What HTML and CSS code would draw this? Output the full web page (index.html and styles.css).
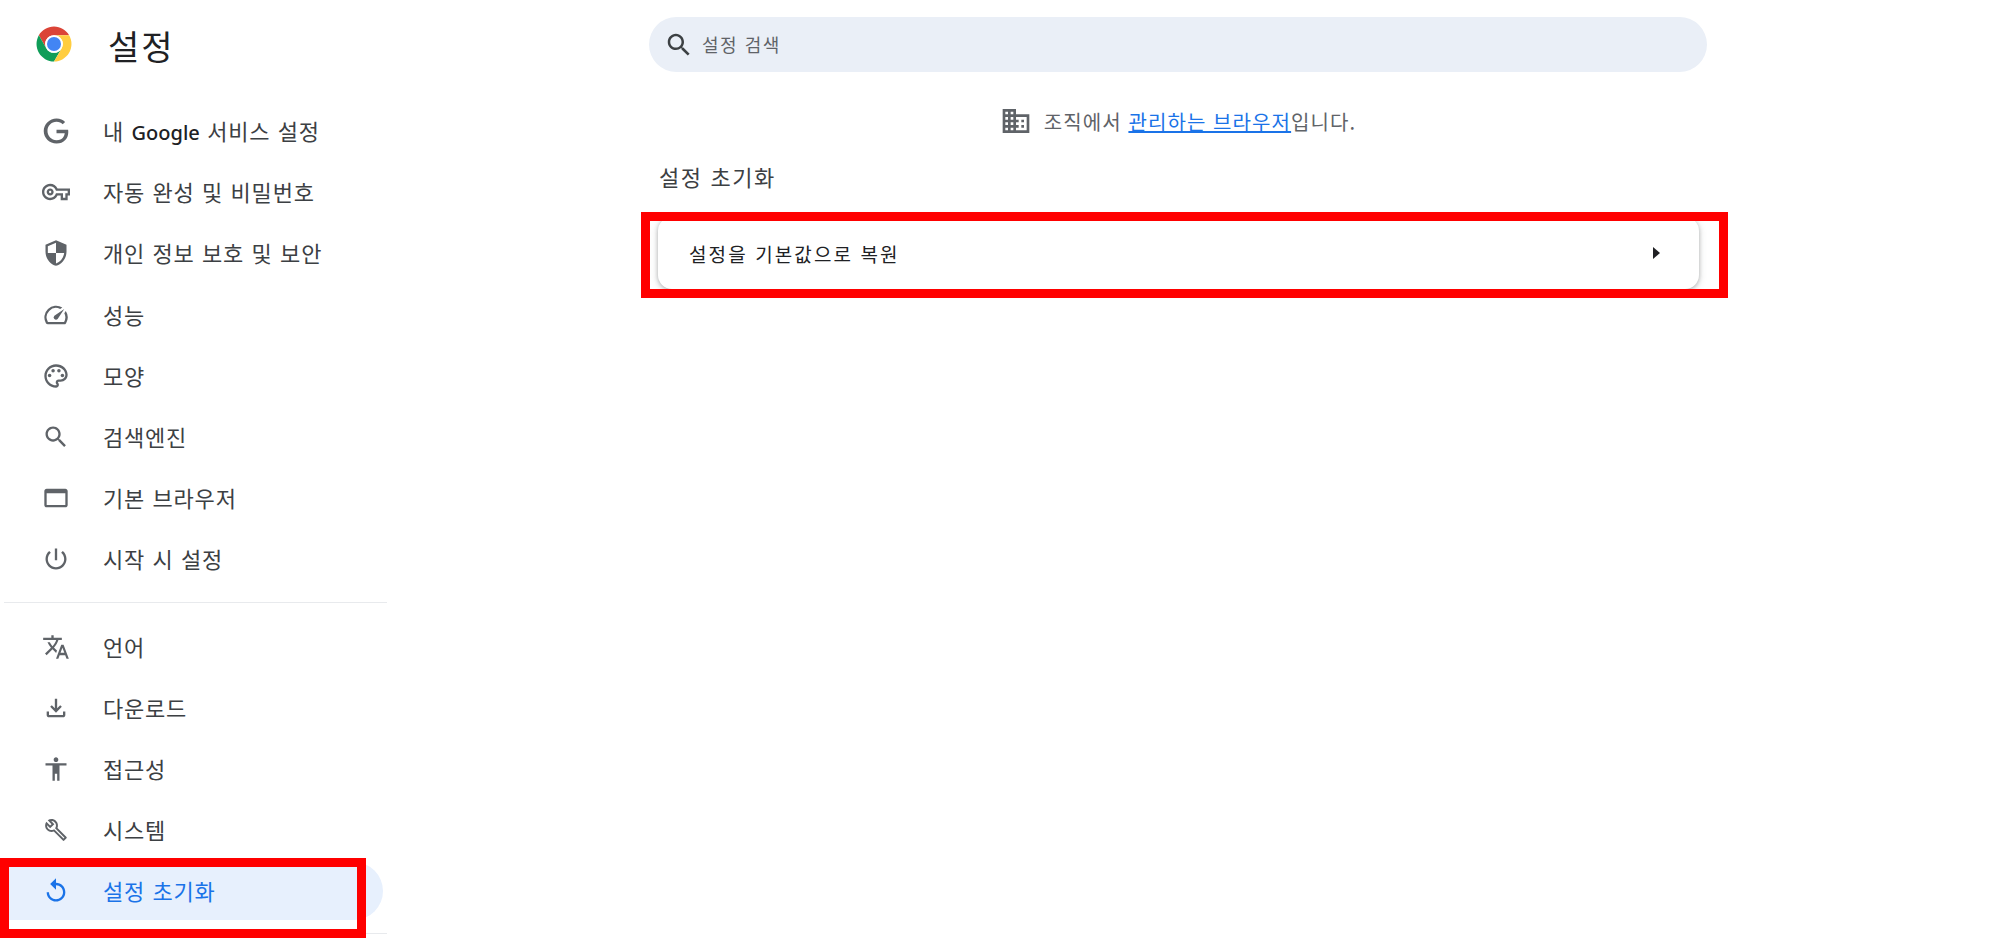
FILE: index.html
```html
<!DOCTYPE html>
<html lang="ko">
<head>
  <meta charset="UTF-8">
  <title>설정 초기화</title>
  <link rel="stylesheet" href="styles.css">
</head>
<body>
  <aside class="sidebar">
    <div class="brand">
      <svg class="logo" viewBox="0 0 48 48">
        <path fill="#db4437" d="M24 4C16.6 4 10.1 8 6.7 14l8.6 15A10 10 0 0 1 24 14h17.3C37.9 8 31.4 4 24 4z"/>
        <path fill="#0f9d58" d="M6.7 14A20 20 0 0 0 24 44l8.7-15A10 10 0 0 1 15.3 29z"/>
        <path fill="#ffcd40" d="M41.3 14H24a10 10 0 0 1 8.7 15L24 44a20 20 0 0 0 17.3-30z"/>
        <circle cx="24" cy="24" r="10" fill="#fff"/>
        <circle cx="24" cy="24" r="8" fill="#4285f4"/>
      </svg>
      <h1 class="brand-title">설정</h1>
    </div>

    <nav class="nav">
      <a class="nav-item">
        <svg class="icon" viewBox="0 0 24 24"><path transform="translate(1.2 1.2) scale(.9)" d="M12.48 10.92v3.28h7.84c-.24 1.84-.853 3.187-1.787 4.133-1.147 1.147-2.933 2.4-6.053 2.4-4.827 0-8.6-3.893-8.6-8.72s3.773-8.72 8.6-8.72c2.6 0 4.507 1.027 5.907 2.347l2.307-2.307C18.747 1.44 16.133 0 12.48 0 5.867 0 .307 5.387.307 12s5.56 12 12.173 12c3.573 0 6.267-1.173 8.373-3.36 2.16-2.16 2.84-5.213 2.84-7.667 0-.76-.053-1.467-.173-2.053H12.48z"/></svg>
        <span>내 <b class="google">Google</b> 서비스 설정</span>
      </a>
      <a class="nav-item">
        <svg class="icon" viewBox="0 0 24 24"><path d="M22 19h-6v-4h-2.68c-1.14 2.42-3.6 4-6.32 4-3.86 0-7-3.14-7-7s3.14-7 7-7c2.72 0 5.17 1.58 6.32 4H24v6h-2v4zm-4-2h2v-4h2v-2H11.94l-.23-.67C11.01 8.34 9.11 7 7 7c-2.76 0-5 2.24-5 5s2.24 5 5 5c2.11 0 4.01-1.34 4.71-3.33l.23-.67H18v4zM7 15c-1.65 0-3-1.35-3-3s1.35-3 3-3 3 1.35 3 3-1.35 3-3 3zm0-4c-.55 0-1 .45-1 1s.45 1 1 1 1-.45 1-1-.45-1-1-1z"/></svg>
        <span>자동 완성 및 비밀번호</span>
      </a>
      <a class="nav-item">
        <svg class="icon" viewBox="0 0 24 24"><path d="M12 1L3 5v6c0 5.55 3.84 10.74 9 12 5.16-1.26 9-6.45 9-12V5l-9-4zm0 10.99h7c-.53 4.12-3.28 7.79-7 8.94V12H5V6.3l7-3.11v8.8z"/></svg>
        <span>개인 정보 보호 및 보안</span>
      </a>
      <a class="nav-item">
        <svg class="icon" viewBox="0 0 24 24"><path d="M20.38 8.57l-1.23 1.85a8 8 0 0 1-.22 7.58H5.07A8 8 0 0 1 15.58 6.85l1.85-1.23A10 10 0 0 0 3.35 19a2 2 0 0 0 1.72 1h13.85a2 2 0 0 0 1.74-1 10 10 0 0 0-.27-10.44z"/><path d="M10.59 15.41a2 2 0 0 0 2.83 0l5.66-8.49-8.49 5.66a2 2 0 0 0 0 2.83z"/></svg>
        <span>성능</span>
      </a>
      <a class="nav-item">
        <svg class="icon" viewBox="0 0 24 24"><path d="M12 22C6.49 22 2 17.51 2 12S6.49 2 12 2s10 4.04 10 9c0 3.31-2.69 6-6 6h-1.77c-.28 0-.5.22-.5.5 0 .12.05.23.13.33.41.47.64 1.06.64 1.67 0 1.38-1.12 2.5-2.5 2.5zm0-18c-4.41 0-8 3.59-8 8s3.59 8 8 8c.28 0 .5-.22.5-.5 0-.16-.08-.28-.14-.35-.41-.46-.63-1.05-.63-1.65 0-1.38 1.12-2.5 2.5-2.5H16c2.21 0 4-1.79 4-4 0-3.86-3.59-7-8-7z"/><circle cx="6.5" cy="11.5" r="1.5"/><circle cx="9.5" cy="7.5" r="1.5"/><circle cx="14.5" cy="7.5" r="1.5"/><circle cx="17.5" cy="11.5" r="1.5"/></svg>
        <span>모양</span>
      </a>
      <a class="nav-item">
        <svg class="icon" viewBox="0 0 24 24"><path d="M15.5 14h-.79l-.28-.27C15.41 12.59 16 11.11 16 9.5 16 5.91 13.09 3 9.5 3S3 5.91 3 9.5 5.91 16 9.5 16c1.61 0 3.09-.59 4.23-1.57l.27.28v.79l5 4.99L20.49 19l-4.99-5zm-6 0C7.01 14 5 11.99 5 9.5S7.01 5 9.5 5 14 7.01 14 9.5 11.99 14 9.5 14z"/></svg>
        <span>검색엔진</span>
      </a>
      <a class="nav-item">
        <svg class="icon" viewBox="0 0 24 24"><path d="M20 4H4c-1.11 0-2 .9-2 2v12c0 1.1.89 2 2 2h16c1.1 0 2-.9 2-2V6c0-1.1-.89-2-2-2zm0 14H4V8h16v10z"/></svg>
        <span>기본 브라우저</span>
      </a>
      <a class="nav-item">
        <svg class="icon" viewBox="0 0 24 24"><path d="M13 3h-2v10h2V3zm4.83 2.17l-1.42 1.42C17.99 7.86 19 9.81 19 12c0 3.87-3.13 7-7 7s-7-3.13-7-7c0-2.19 1.01-4.14 2.58-5.42L6.17 5.17C4.23 6.82 3 9.26 3 12c0 4.97 4.03 9 9 9s9-4.03 9-9c0-2.74-1.23-5.18-3.17-6.83z"/></svg>
        <span>시작 시 설정</span>
      </a>

      <div class="nav-divider"></div>

      <a class="nav-item">
        <svg class="icon" viewBox="0 0 24 24"><path d="M12.87 15.07l-2.54-2.51.03-.03c1.74-1.94 2.98-4.17 3.71-6.53H17V4h-7V2H8v2H1v1.99h11.17C11.5 7.92 10.44 9.75 9 11.35 8.07 10.32 7.3 9.19 6.69 8h-2c.73 1.63 1.73 3.17 2.98 4.56l-5.09 5.02L4 19l5-5 3.11 3.11.76-2.04zM18.5 10h-2L12 22h2l1.12-3h4.75L21 22h2l-4.5-12zm-2.62 7l1.62-4.33L19.12 17h-3.24z"/></svg>
        <span>언어</span>
      </a>
      <a class="nav-item">
        <svg class="icon" viewBox="0 0 24 24"><path d="M12 16l-5-5 1.41-1.41L11 12.17V4h2v8.17l2.59-2.58L17 11l-5 5zm-6 4c-.55 0-1.02-.2-1.41-.59C4.2 19.02 4 18.55 4 18v-3h2v3h12v-3h2v3c0 .55-.2 1.02-.59 1.41-.39.39-.86.59-1.41.59H6z"/></svg>
        <span>다운로드</span>
      </a>
      <a class="nav-item">
        <svg class="icon" viewBox="0 0 24 24"><path d="M12 2c1.1 0 2 .9 2 2s-.9 2-2 2-2-.9-2-2 .9-2 2-2zm9 7h-6v13h-2v-6h-2v6H9V9H3V7h18v2z"/></svg>
        <span>접근성</span>
      </a>
      <a class="nav-item">
        <svg class="icon" viewBox="0 0 24 24"><path transform="translate(1.8 1.8) scale(.85)" d="M22.61 18.99l-9.08-9.08c.93-2.34.45-5.1-1.44-7C9.79.61 6.21.4 3.66 2.26L7.5 6.11 6.08 7.52 2.25 3.69C.39 6.23.6 9.82 2.9 12.11c1.86 1.86 4.57 2.35 6.89 1.48l9.11 9.11c.39.39 1.02.39 1.41 0l2.3-2.3c.4-.38.4-1.01 0-1.41zm-3 1.6l-9.46-9.46c-.61.45-1.29.72-2 .82-1.36.2-2.79-.21-3.83-1.25C3.37 9.76 2.93 8.5 3 7.26l3.09 3.09 4.24-4.24-3.09-3.09c1.24-.07 2.49.37 3.44 1.31 1.08 1.08 1.49 2.57 1.24 3.96-.12.71-.42 1.37-.88 1.96l9.45 9.45-.88.88z"/></svg>
        <span>시스템</span>
      </a>
      <a class="nav-item active">
        <svg class="icon" viewBox="0 0 24 24"><path d="M12 5V1L7 6l5 5V7c3.31 0 6 2.69 6 6s-2.69 6-6 6-6-2.69-6-6H4c0 4.42 3.58 8 8 8s8-3.58 8-8-3.58-8-8-8z"/></svg>
        <span>설정 초기화</span>
      </a>

      <div class="nav-divider bottom"></div>
    </nav>
  </aside>

  <main class="main">
    <div class="search">
      <svg class="search-icon" viewBox="0 0 24 24"><path d="M15.5 14h-.79l-.28-.27C15.41 12.59 16 11.11 16 9.5 16 5.91 13.09 3 9.5 3S3 5.91 3 9.5 5.91 16 9.5 16c1.61 0 3.09-.59 4.23-1.57l.27.28v.79l5 4.99L20.49 19l-4.99-5zm-6 0C7.01 14 5 11.99 5 9.5S7.01 5 9.5 5 14 7.01 14 9.5 11.99 14 9.5 14z"/></svg>
      <span class="search-text">설정 검색</span>
    </div>

    <div class="notice">
      <svg class="notice-icon" viewBox="0 0 24 24"><path d="M12 7V3H2v18h20V7H12zM6 19H4v-2h2v2zm0-4H4v-2h2v2zm0-4H4V9h2v2zm0-4H4V5h2v2zm4 12H8v-2h2v2zm0-4H8v-2h2v2zm0-4H8V9h2v2zm0-4H8V5h2v2zm10 12h-8v-2h2v-2h-2v-2h2v-2h-2V9h8v10zm-2-8h-2v2h2v-2zm0 4h-2v2h2v-2z"/></svg>
      <span>조직에서 <a class="notice-link">관리하는 브라우저</a>입니다.</span>
    </div>

    <h2 class="section-title">설정 초기화</h2>

    <div class="card">
      <span>설정을 기본값으로 복원</span>
      <span class="arrow"></span>
    </div>
  </main>

  <!-- red annotation boxes drawn over the screenshot -->
  <div class="mark mark-nav"></div>
  <div class="mark mark-card"></div>
</body>
</html>
```

FILE: styles.css
```css
* {
  box-sizing: border-box;
}

body {
  display: flex;
  height: 939px;
  margin: 0;
  overflow: hidden;
  position: relative;
  background: #fff;
  color: #3c4043;
  font-family: "Noto Sans CJK KR", "Noto Sans", sans-serif;
}

/* Sidebar */
.sidebar {
  width: 390px;
  flex-shrink: 0;
}

.brand {
  display: flex;
  align-items: center;
  height: 88px;
  padding-left: 33px;
}

.logo {
  width: 42px;
  height: 42px;
}

.brand-title {
  margin: 3px 0 0 33px;
  font-size: 34px;
  font-weight: 400;
  letter-spacing: 2px;
  color: #202124;
  line-height: 1;
}

.nav {
  display: flex;
  flex-direction: column;
  padding-top: 14px;
}

.nav-item {
  display: flex;
  align-items: center;
  width: 383px;
  height: 58px;
  margin-bottom: 3.2px;
  padding-left: 42px;
  border-radius: 0 29px 29px 0;
  font-size: 22px;
  letter-spacing: 0.8px;
  word-spacing: 0.5px;
}

.nav-item span {
  padding-bottom: 2px;
}

.icon {
  width: 28px;
  height: 28px;
  margin-right: 33px;
  flex-shrink: 0;
  fill: #5f6368;
}

.google {
  font-family: "Noto Sans", sans-serif;
  font-size: 20px;
  font-weight: 500;
  color: #202124;
  letter-spacing: 0;
}

.nav-item.active {
  background: #e7f0fd;
  color: #1a73e8;
}

.nav-item.active .icon {
  fill: #1a73e8;
}

.nav-divider {
  width: 383px;
  height: 1px;
  margin: 10px 0 15px 4px;
  background: #e8eaed;
}

.nav-divider.bottom {
  margin: 10px 0 0 4px;
}

/* Main column */
.main {
  width: 1058px;
  margin-left: 259px;
  padding-top: 17px;
}

.search {
  display: flex;
  align-items: center;
  height: 55px;
  padding-left: 15px;
  border-radius: 28px;
  background: #eaeff7;
}

.search-icon {
  width: 30px;
  height: 30px;
  margin-right: 8px;
  fill: #3c4043;
}

.search-text {
  padding-bottom: 2px;
  font-size: 18px;
  letter-spacing: 1.5px;
  color: #5f6368;
}

.notice {
  display: flex;
  align-items: center;
  justify-content: center;
  height: 34px;
  margin-top: 32px;
  font-size: 20px;
  letter-spacing: 1.1px;
  color: #5f6368;
}

.notice-icon {
  width: 32px;
  height: 32px;
  margin-right: 12px;
  fill: #5f6368;
}

.notice-link {
  color: #1a73e8;
  text-decoration: underline;
}

.section-title {
  margin: 24px 0 0 10px;
  font-size: 22px;
  font-weight: 400;
  letter-spacing: 1.6px;
  line-height: 28px;
  color: #3c4043;
}

.card {
  display: flex;
  align-items: center;
  justify-content: space-between;
  width: 1041px;
  height: 72px;
  margin: 26.5px 0 0 9px;
  padding: 1px 39px 0 31px;
  border-radius: 14px;
  background: #fff;
  box-shadow: 0 1px 4px rgba(60, 64, 67, 0.35), 0 2px 8px rgba(60, 64, 67, 0.15);
  font-size: 19px;
  letter-spacing: 2.1px;
  color: #202124;
}

.arrow {
  width: 0;
  height: 0;
  border-top: 6.5px solid transparent;
  border-bottom: 6.5px solid transparent;
  border-left: 7px solid #202124;
}

/* Red annotation boxes */
.mark {
  position: absolute;
  border: 9px solid #f00;
}

.mark-nav {
  left: 0;
  top: 858px;
  width: 366px;
  height: 80px;
}

.mark-card {
  left: 641px;
  top: 212px;
  width: 1087px;
  height: 86px;
}
```
